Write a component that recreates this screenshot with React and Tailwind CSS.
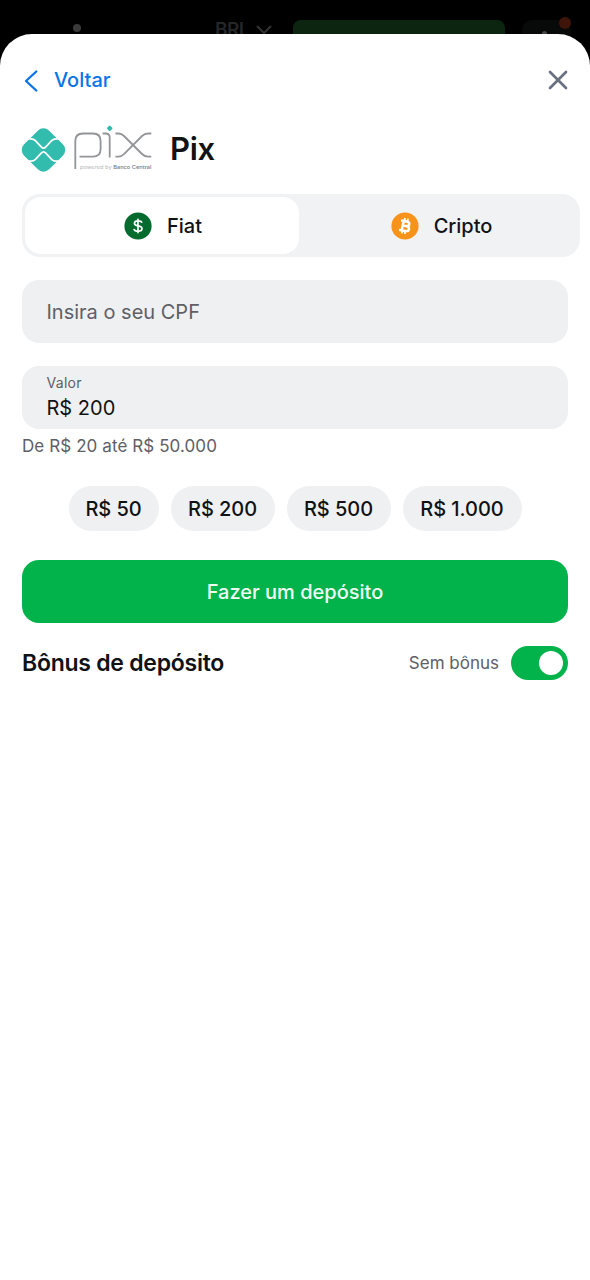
import React from "react";

function PixLogo() {
  return (
    <svg className="h-[48px] w-[132px] shrink-0" viewBox="21 125 132 48" fill="none">
      <rect x="25.8" y="132.3" width="35.4" height="35.4" rx="8" transform="rotate(45 43.5 150)" fill="#32bcad" />
      <g stroke="#fff" strokeWidth="1.7">
        <path d="M27 138.8H31Q33.6 138.8 35.4 140.6L41.2 146.8Q43.5 149.3 45.8 146.8L51.6 140.6Q53.4 138.8 56 138.8H60" />
        <path d="M27 161.2H31Q33.6 161.2 35.4 159.4L41.2 153.2Q43.5 150.7 45.8 153.2L51.6 159.4Q53.4 161.2 56 161.2H60" />
      </g>
      <path fill="#32bcad" d="M108.9 125.9Q109.7 125.1 110.5 125.9L112.1 127.5Q112.9 128.3 112.1 129.1L110.5 130.7Q109.7 131.5 108.9 130.7L107.3 129.1Q106.5 128.3 107.3 127.5Z" />
      <g stroke="#939598" strokeWidth="1.8">
        <path d="M75.3 169V141Q75.3 133.5 83 133.5H93Q100.6 133.5 100.6 141V149Q100.6 156.7 93 156.7H79.5" />
        <path d="M102.6 133.5H105.5Q109.7 133.5 109.7 137.5V157.5" />
        <path d="M115.5 133.5H118.5Q121.5 133.5 124 136L142 154Q144.8 156.7 148 156.7H151.3" />
        <path d="M115.5 156.7H118.5Q121.5 156.7 124 154L142 136Q144.8 133.5 148 133.5H151.3" />
      </g>
      <text x="80" y="168.7" textLength="71.5" lengthAdjust="spacingAndGlyphs" fontSize="4.6" fill="#b4b6b9" className="font-['Inter',sans-serif]">
        powered by <tspan fontWeight="500" fill="#77797c">Banco Central</tspan>
      </text>
    </svg>
  );
}

function DollarIcon() {
  return (
    <svg className="size-[28px]" viewBox="0 0 28 28">
      <circle cx="14" cy="14" r="13.6" fill="#036b2d" />
      <path d="M18 10.8Q17.3 8.9 14 8.9Q10.5 8.9 10.4 11.3Q10.4 13.3 14 13.9Q18 14.5 18 16.8Q17.9 19.3 14.2 19.3Q10.6 19.3 9.8 17M14 6.8V21.2" fill="none" stroke="#fff" strokeWidth="1.7" />
    </svg>
  );
}

function BitcoinIcon() {
  return (
    <svg className="size-[28px]" viewBox="0 0 28 28">
      <circle cx="14" cy="14" r="13.6" fill="#f7931a" />
      <g transform="rotate(12 14 14)" fill="none" stroke="#fff">
        <path d="M9 9.3H14.6Q17.8 9.3 17.8 11.6Q17.8 13.8 14.6 13.8H11.6M14.6 13.8Q18.6 13.8 18.6 16.3Q18.6 18.8 15 18.8H9M11.7 9V19" strokeWidth="2.5" />
        <path d="M12.4 6.2V9M15.4 6.2V9M12.4 19V21.9M15.4 19V21.9" strokeWidth="1.8" />
      </g>
    </svg>
  );
}

function TopBar() {
  return (
    <div className="flex h-[60px] items-start bg-black pr-[19px] pl-[73px]">
      <span className="mt-[24px] size-[8px] rounded-full bg-[#3a3a3a]" />
      <span className="mt-[18px] ml-[134px] w-[29px] text-[19px] leading-6 font-semibold tracking-[-0.6px] text-[#252627]">BRL</span>
      <svg className="mt-[22px] ml-[11px] h-[16px] w-[18px]" viewBox="0 0 18 16" fill="none" stroke="#303132" strokeWidth="2.2">
        <path d="M2 4 9 11 16 4" />
      </svg>
      <span className="mt-[20px] ml-auto h-[40px] w-[212px] shrink-0 rounded-[8px] bg-[#0c2511]" />
      <span className="relative mt-[20px] ml-[17px] h-[40px] w-[49px] shrink-0 rounded-[10px] bg-[#080909]">
        <span className="absolute top-[11px] left-[20px] size-[5px] rounded-full bg-[#454545]" />
        <span className="absolute -top-[3px] right-0 size-[12px] rounded-full bg-[#3e1508]" />
      </span>
    </div>
  );
}

const chips = [
  { label: "R$ 50", size: "w-[90px]" },
  { label: "R$ 200", size: "w-[104px]" },
  { label: "R$ 500", size: "w-[104px]" },
  { label: "R$ 1.000", size: "w-[119px]" },
];

export default function App() {
  return (
    <div className="h-[1280px] w-[590px] overflow-hidden bg-black font-['Inter',sans-serif] text-[#111214]">
      <TopBar />
      <main className="relative -mt-[26px] flex h-[1246px] flex-col rounded-t-[32px] bg-white px-[22px]">
        <header className="mt-[31px] flex h-[30px] items-center justify-between">
          <button className="flex items-center text-[20px] font-[550] text-[#0b73e8]">
            <svg className="mt-[2px] h-[24px] w-[18px]" viewBox="0 0 18 24" fill="none" stroke="currentColor" strokeWidth="2.3" strokeLinecap="round" strokeLinejoin="round">
              <path d="M14.3 2.5 4 12 14.3 21.5" />
            </svg>
            <span className="ml-[14px]">Voltar</span>
          </button>
          <svg className="size-[20px]" viewBox="0 0 20 20" fill="none" stroke="#697080" strokeWidth="2.7" strokeLinecap="round">
            <path d="M2 2 18 18M18 2 2 18" />
          </svg>
        </header>

        <div className="-ml-[1px] mt-[30px] flex h-[48px] items-center">
          <PixLogo />
          <h1 className="ml-[17px] text-[31px] leading-[48px] font-semibold tracking-[-0.3px]">Pix</h1>
        </div>

        <div className="mt-[21px] flex h-[63px] w-[558px] rounded-[18px] bg-[#f1f2f4] p-[3px] text-[20px] font-[550]">
          <button className="flex w-[274px] items-center justify-center gap-[15px] rounded-[16px] bg-white pl-[2px]">
            <DollarIcon />
            <span>Fiat</span>
          </button>
          <button className="flex flex-1 items-center justify-center gap-[15px] pl-[7px]">
            <BitcoinIcon />
            <span>Cripto</span>
          </button>
        </div>

        <div className="mt-[23px] flex h-[63px] items-center rounded-[17px] bg-[#eff0f2] px-[24.5px] text-[20px] text-[#5e6066]">Insira o seu CPF</div>

        <div className="mt-[23px] flex h-[63px] flex-col rounded-[17px] bg-[#eff0f2] px-[24.5px] pt-[8px]">
          <span className="text-[14px] leading-[18px] tracking-[0.3px] text-[#5e6066]">Valor</span>
          <span className="text-[20px] leading-[32px]">R$ 200</span>
        </div>
        <p className="mt-[5px] text-[17px] leading-[24px] tracking-[0.09px] text-[#5e6066]">De R$ 20 até R$ 50.000</p>

        <div className="mt-[28px] flex justify-center gap-[12px]">
          {chips.map((chip) => (
            <button key={chip.label} className={`${chip.size} h-[45px] rounded-full bg-[#eff0f2] text-[20px] font-[550] tracking-[-0.05px] whitespace-nowrap`}>
              {chip.label}
            </button>
          ))}
        </div>

        <button className="mt-[29px] h-[63px] shrink-0 rounded-[17px] bg-[#02b24b] text-[20px] font-[550] text-[#effff4]">Fazer um depósito</button>

        <div className="mt-[23px] flex h-[34px] items-center">
          <h2 className="text-[23px] font-semibold tracking-[-0.25px]">Bônus de depósito</h2>
          <span className="mt-[2px] ml-auto text-[17px] text-[#5e6066]">Sem bônus</span>
          <span className="ml-[12px] flex h-[34px] w-[57px] items-center justify-end rounded-full bg-[#02b24b] pr-[5px]">
            <span className="size-[24px] rounded-full bg-white" />
          </span>
        </div>
      </main>
    </div>
  );
}
